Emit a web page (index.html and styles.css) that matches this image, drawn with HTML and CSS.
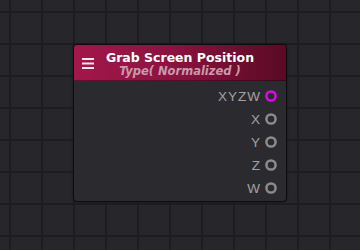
FILE: index.html
```html
<!DOCTYPE html>
<html>
<head>
<meta charset="utf-8">
<link rel="stylesheet" href="styles.css">
</head>
<body>
<div class="canvas">
  <div class="node">
    <div class="node-header">
      <svg class="menu-icon" width="12" height="11" viewBox="0 0 12 11">
        <rect x="0" y="0" width="12" height="2" fill="#f2e6ea"/>
        <rect x="0" y="4.5" width="12" height="2" fill="#f2e6ea"/>
        <rect x="0" y="9" width="12" height="2" fill="#f2e6ea"/>
      </svg>
      <div class="titles">
        <div class="title">Grab Screen Position</div>
        <div class="subtitle">Type( Normalized )</div>
      </div>
      <div class="spacer"></div>
    </div>
    <div class="node-body">
      <div class="port"><span class="port-label">XYZW</span><svg class="port-dot" width="12" height="12" viewBox="0 0 12 12"><circle cx="6" cy="6" r="4.6" fill="none" stroke="#e10ae4" stroke-width="2.5"/></svg></div>
      <div class="port"><span class="port-label">X</span><svg class="port-dot" width="12" height="12" viewBox="0 0 12 12"><circle cx="6" cy="6" r="4.6" fill="none" stroke="#8c8c8c" stroke-width="2.5"/></svg></div>
      <div class="port"><span class="port-label">Y</span><svg class="port-dot" width="12" height="12" viewBox="0 0 12 12"><circle cx="6" cy="6" r="4.6" fill="none" stroke="#8c8c8c" stroke-width="2.5"/></svg></div>
      <div class="port"><span class="port-label">Z</span><svg class="port-dot" width="12" height="12" viewBox="0 0 12 12"><circle cx="6" cy="6" r="4.6" fill="none" stroke="#8c8c8c" stroke-width="2.5"/></svg></div>
      <div class="port"><span class="port-label">W</span><svg class="port-dot" width="12" height="12" viewBox="0 0 12 12"><circle cx="6" cy="6" r="4.6" fill="none" stroke="#8c8c8c" stroke-width="2.5"/></svg></div>
    </div>
  </div>
</div>
</body>
</html>
```
FILE: styles.css
```css
html, body {
  margin: 0;
  padding: 0;
}
body {
  width: 360px;
  height: 250px;
  overflow: hidden;
  background-color: #27272b;
  font-family: "DejaVu Sans", Verdana, sans-serif;
}
.canvas {
  position: relative;
  width: 360px;
  height: 250px;
  background-color: #27272b;
  background-image:
    linear-gradient(to right, #1d1d20 0, #1d1d20 2px, transparent 2px),
    linear-gradient(to bottom, #1d1d20 0, #1d1d20 2px, transparent 2px);
  background-size: 32px 32px, 32px 32px;
  background-position: 9px 0, 0 11px;
}
.node {
  position: absolute;
  left: 73px;
  top: 44px;
  width: 212px;
  height: 156px;
  border: 1px solid #0d0d0e;
  border-radius: 4px;
  background: #2b2b2f;
  display: flex;
  flex-direction: column;
  box-shadow: 0 0 2px rgba(0,0,0,0.5);
}
.node-header {
  height: 36px;
  display: flex;
  align-items: flex-start;
  padding: 0 8px;
  border-radius: 3px 3px 0 0;
  background: linear-gradient(to right, #a3174a 0%, #8c1340 45%, #5a0a24 100%);
  box-shadow: inset 0 -1px 0 rgba(0,0,0,0.35);
}
.menu-icon {
  align-self: center;
  flex: none;
}
.spacer {
  width: 12px;
  flex: none;
}
.titles {
  flex: 1;
  text-align: center;
  padding-top: 6px;
}
.title {
  color: #ffffff;
  font-weight: bold;
  font-size: 12.5px;
  line-height: 14px;
  white-space: nowrap;
}
.subtitle {
  color: #c99aab;
  font-weight: bold;
  font-style: italic;
  font-size: 11.5px;
  line-height: 13px;
  white-space: nowrap;
}
.node-body {
  flex: 1;
  padding-top: 3px;
  display: flex;
  flex-direction: column;
}
.port {
  height: 23px;
  display: flex;
  align-items: center;
  justify-content: flex-end;
  gap: 4px;
  padding-right: 9px;
}
.port-label {
  color: #a2a2a2;
  font-family: "Liberation Sans", Arial, sans-serif;
  font-size: 13.5px;
  line-height: 23px;
  letter-spacing: 1px;
  padding-top: 2px;
}
.port-dot {
  flex: none;
}
```
